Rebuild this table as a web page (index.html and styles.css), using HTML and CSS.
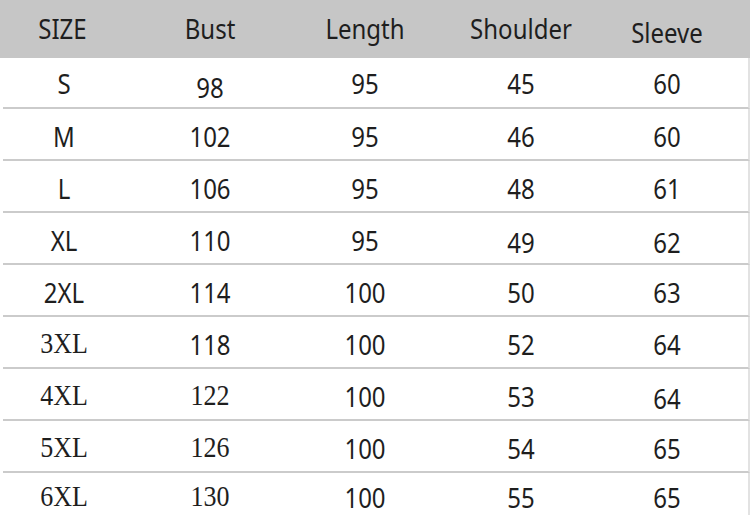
FILE: index.html
```html
<!DOCTYPE html>
<html>
<head>
<meta charset="utf-8">
<link rel="stylesheet" href="styles.css">
</head>
<body>
<div class="chart">
  <div class="row head">
    <div class="cell">SIZE</div><div class="cell">Bust</div><div class="cell">Length</div><div class="cell">Shoulder</div><div class="cell low">Sleeve</div>
  </div>
  <div class="row first">
    <div class="cell">S</div><div class="cell low">98</div><div class="cell">95</div><div class="cell">45</div><div class="cell">60</div>
  </div>
  <div class="row">
    <div class="cell">M</div><div class="cell">102</div><div class="cell">95</div><div class="cell">46</div><div class="cell">60</div>
  </div>
  <div class="row">
    <div class="cell">L</div><div class="cell">106</div><div class="cell">95</div><div class="cell">48</div><div class="cell">61</div>
  </div>
  <div class="row">
    <div class="cell">XL</div><div class="cell">110</div><div class="cell">95</div><div class="cell low">49</div><div class="cell low">62</div>
  </div>
  <div class="row">
    <div class="cell">2XL</div><div class="cell">114</div><div class="cell">100</div><div class="cell">50</div><div class="cell">63</div>
  </div>
  <div class="row">
    <div class="cell serif">3XL</div><div class="cell">118</div><div class="cell">100</div><div class="cell">52</div><div class="cell">64</div>
  </div>
  <div class="row">
    <div class="cell serif">4XL</div><div class="cell serif">122</div><div class="cell">100</div><div class="cell">53</div><div class="cell low">64</div>
  </div>
  <div class="row">
    <div class="cell serif">5XL</div><div class="cell serif">126</div><div class="cell">100</div><div class="cell">54</div><div class="cell">65</div>
  </div>
  <div class="row last">
    <div class="cell serif">6XL</div><div class="cell serif">130</div><div class="cell">100</div><div class="cell">55</div><div class="cell">65</div>
  </div>
</div>
</body>
</html>
```
FILE: styles.css
```css
html, body {
  margin: 0;
  padding: 0;
  background: #ffffff;
}
body {
  width: 750px;
  height: 515px;
  overflow: hidden;
  font-family: "Noto Sans", "DejaVu Sans", sans-serif;
  color: #1e1e1e;
}
.chart {
  display: flex;
  flex-direction: column;
  width: 750px;
}
.row {
  display: grid;
  grid-template-columns: 122px 170px 140px 172px 120px 1fr;
  height: 50px;
  margin-left: 3px;
  border-bottom: 2px solid #cbcbcb;
  border-right: 2px solid #e2e2e2;
  width: 745px;
}
.row.head {
  height: 58px;
  margin-left: 0;
  width: 750px;
  border: none;
  background: #c6c6c6;
  grid-template-columns: 125px 170px 140px 172px 120px 1fr;
}
.row.first {
  height: 49px;
}
.row.last {
  height: 44px;
  border-bottom: none;
}
.cell {
  display: flex;
  align-items: center;
  justify-content: center;
  font-size: 24px;
  line-height: 1;
  padding-top: 3px;
  transform: scaleY(1.14);
}
.head .cell {
  font-size: 24px;
  padding-top: 0;
}
.cell.low {
  padding-top: 8px;
}
.head .cell.low {
  padding-top: 5px;
}
.serif {
  font-family: "Liberation Serif", "Times New Roman", serif;
  font-size: 26px;
}
```
